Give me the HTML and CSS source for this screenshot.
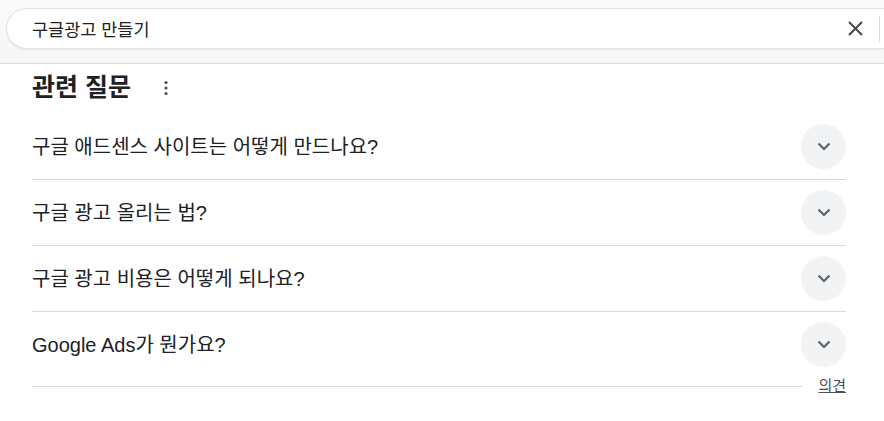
FILE: index.html
```html
<!DOCTYPE html>
<html lang="ko">
<head>
<meta charset="utf-8">
<title>구글광고 만들기</title>
<link rel="stylesheet" href="styles.css">
</head>
<body>
<header class="topbar">
  <div class="searchbox">
    <span class="query">구글광고 만들기</span>
    <span class="clear" aria-label="지우기">
      <svg width="15" height="15" viewBox="0 0 15 15"><path d="M1 1L14 14M14 1L1 14" stroke="#474747" stroke-width="2" fill="none"/></svg>
    </span>
    <span class="vsep"></span>
  </div>
</header>
<main class="content">
  <div class="heading-row">
    <h2 class="heading">관련 질문</h2>
    <span class="more" aria-label="더보기">
      <svg width="4" height="16" viewBox="0 0 4 16"><circle cx="2" cy="2.5" r="1.6" fill="#4d5156"/><circle cx="2" cy="8" r="1.6" fill="#4d5156"/><circle cx="2" cy="13.5" r="1.6" fill="#4d5156"/></svg>
    </span>
  </div>
  <ul class="questions">
    <li class="q"><span class="q-text">구글 애드센스 사이트는 어떻게 만드나요?</span><span class="chev"><svg width="14" height="9" viewBox="0 0 14 9"><path d="M1.5 1.5L7 7L12.5 1.5" stroke="#5f6368" stroke-width="2.2" fill="none"/></svg></span></li>
    <li class="q"><span class="q-text">구글 광고 올리는 법?</span><span class="chev"><svg width="14" height="9" viewBox="0 0 14 9"><path d="M1.5 1.5L7 7L12.5 1.5" stroke="#5f6368" stroke-width="2.2" fill="none"/></svg></span></li>
    <li class="q"><span class="q-text">구글 광고 비용은 어떻게 되나요?</span><span class="chev"><svg width="14" height="9" viewBox="0 0 14 9"><path d="M1.5 1.5L7 7L12.5 1.5" stroke="#5f6368" stroke-width="2.2" fill="none"/></svg></span></li>
    <li class="q last"><span class="q-text">Google Ads가 뭔가요?</span><span class="chev"><svg width="14" height="9" viewBox="0 0 14 9"><path d="M1.5 1.5L7 7L12.5 1.5" stroke="#5f6368" stroke-width="2.2" fill="none"/></svg></span></li>
  </ul>
  <div class="feedback-row">
    <span class="fline"></span>
    <a class="feedback" href="#">의견</a>
  </div>
</main>
</body>
</html>
```
FILE: styles.css
```css
* { box-sizing: border-box; }
html, body { margin: 0; padding: 0; background: #fff; }
body {
  font-family: "Liberation Sans", Arial, "Noto Sans CJK KR", sans-serif;
  color: #202124;
  width: 884px;
  overflow: hidden;
}
.topbar {
  height: 64px;
  padding: 8px 0 0 6px;
  background: linear-gradient(#fbfbfb, #f5f5f5);
  border-bottom: 1px solid #dadce0;
}
.searchbox {
  height: 41px;
  background: #fff;
  border: 1px solid #dfe1e5;
  border-right: none;
  border-radius: 22px 0 0 22px;
  box-shadow: 0 1px 2px rgba(0,0,0,0.06);
  display: flex;
  align-items: center;
  padding-left: 25px;
}
.query {
  flex: 1;
  font-size: 17.5px;
  color: #202124;
}
.clear {
  display: flex;
  width: 15px;
  height: 15px;
  margin-right: 16px;
}
.vsep {
  width: 1px;
  height: 26px;
  background: #dadce0;
  margin-right: 4px;
}
.content {
  width: 846px;
  padding-left: 32px;
}
.heading-row {
  height: 50px;
  display: flex;
  align-items: center;
  padding-bottom: 4px;
}
.heading {
  margin: 0;
  font-size: 25px;
  font-weight: 700;
  line-height: 30px;
  color: #202124;
}
.more {
  display: flex;
  margin-left: 33px;
  margin-top: 2px;
}
.questions {
  list-style: none;
  margin: 0;
  padding: 0;
}
.q {
  height: 66px;
  display: flex;
  align-items: center;
  border-bottom: 1px solid #dadce0;
}
.q.last { border-bottom: none; height: 65px; }
.q-text {
  flex: 1;
  font-size: 20px;
  line-height: 26px;
  color: #202124;
}
.chev {
  width: 45px;
  height: 45px;
  border-radius: 50%;
  background: #f1f3f4;
  display: flex;
  align-items: center;
  justify-content: center;
}
.feedback-row {
  display: flex;
  align-items: center;
  height: 18px;
}
.fline {
  flex: 1;
  height: 1px;
  background: #dadce0;
}
.feedback {
  margin-left: 16px;
  font-size: 15px;
  color: #4d5156;
  text-decoration: underline;
  line-height: 18px;
}
```
